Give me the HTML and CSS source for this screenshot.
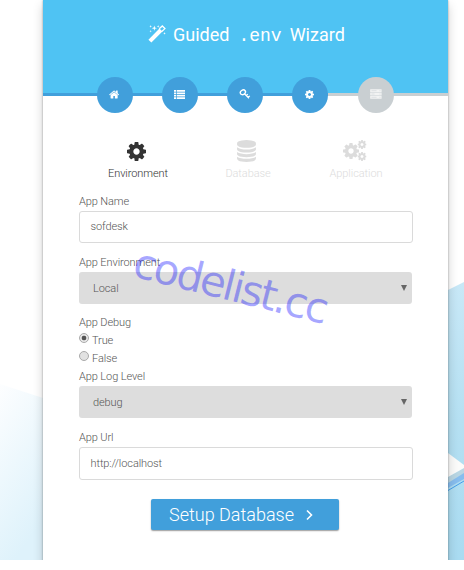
FILE: index.html
```html
<!DOCTYPE html>
<html lang="en">
<head>
<meta charset="utf-8">
<title>Guided .env Wizard</title>
<link rel="stylesheet" href="styles.css">
</head>
<body>
<svg class="defs" width="0" height="0">
  <symbol id="cog" viewBox="128 128 1536 1536"><path d="M1152 896q0-106-75-181t-181-75-181 75-75 181 75 181 181 75 181-75 75-181zm512-109v222q0 12-8 23t-20 13l-185 28q-19 54-39 91 35 50 107 138 10 12 10 25t-9 23q-27 37-99 108t-94 71q-12 0-26-9l-138-108q-44 23-91 38-16 136-29 186-7 28-36 28h-222q-14 0-24.5-8.5t-11.5-21.5l-28-184q-49-16-90-37l-141 107q-10 9-25 9-14 0-25-11-126-114-165-168-7-10-7-23 0-12 8-23 15-21 51-66.5t54-70.5q-27-50-41-99l-183-27q-13-2-21-12.5t-8-23.5v-222q0-12 8-23t19-13l186-28q14-46 39-92-40-57-107-138-10-12-10-24 0-10 9-23 26-36 98.5-107.5t94.5-71.5q13 0 26 10l138 107q44-23 91-38 16-136 29-186 7-28 36-28h222q14 0 24.5 8.5t11.5 21.5l28 184q49 16 90 37l142-107q9-9 24-9 13 0 25 10 129 119 165 170 7 8 7 22 0 12-8 23-15 21-51 66.5t-54 70.5q26 50 41 98l183 28q13 2 21 12.5t8 23.5z"/></symbol>
</svg>
<div class="page">
  <svg class="scenery" viewBox="0 0 464 560">
    <defs>
      <linearGradient id="left" x1="0" y1="0" x2=".35" y2="1"><stop offset="0" stop-color="#fdfeff"/><stop offset="1" stop-color="#def2fb"/></linearGradient>
      <linearGradient id="right" x1="0" y1="0" x2="0" y2="1"><stop offset="0" stop-color="#c8e8f7"/><stop offset=".5" stop-color="#b5e0f2"/><stop offset="1" stop-color="#a9dbf1"/></linearGradient>
    </defs>
    <path fill="url(#left)" d="M0 384L43 398V560H0z"/>
    <path fill="url(#right)" d="M448 290L464 282V560H448z"/>
    <path fill="#b9d6e3" d="M448 477L464 468V474L448 484z"/>
    <path fill="#87bdee" d="M448 483L464 473V479L448 488z"/>
    <path fill="none" stroke="#459eea" d="M448 490.5L464 481"/>
    <path fill="#fbfbfa" d="M448 453L464 465V468L448 477z"/>
  </svg>
  <main class="card">
    <header class="head">
      <svg class="wand" viewBox="0 0 17 17"><path fill="none" stroke="#fff" stroke-width="3.9" d="M1.8 15.2L12.2 4.8"/><path fill="none" stroke="#fff" stroke-width="1.2" d="M10.6 3.6L13.5.9L16 3.4L13 6.2"/><path fill="#fff" d="M6 .5l.6 1.9 1.9.6-1.9.6L6 5.5l-.6-1.9-1.9-.6 1.9-.6zM2.5.1l.3.9.9.3-.9.3-.3.9-.3-.9-.9-.3.9-.3zM9.6.1l.3.9.9.3-.9.3-.3.9-.3-.9-.9-.3.9-.3zM2.5 4.7l.3.9.9.3-.9.3-.3.9-.3-.9-.9-.3.9-.3zM15.6 6.7l.3.9.9.3-.9.3-.3.9-.3-.9-.9-.3.9-.3z"/></svg>
      <h1>Guided <code>.env</code> Wizard</h1>
    </header>
    <nav class="steps">
      <span class="step"><svg width="11" height="11" viewBox="0 0 1792 1792"><path d="M1408 992v480q0 26-19 45t-45 19h-384v-384h-256v384h-384q-26 0-45-19t-19-45v-480q0-1 .5-3t.5-3l575-474 575 474q1 2 1 6zm223-69l-62 74q-8 9-21 11h-3q-13 0-21-7l-692-577-692 577q-12 8-24 7-13-2-21-11l-62-74q-8-10-7-23.5t11-21.5l719-599q32-26 76-26t76 26l244 204v-195q0-14 9-23t23-9h192q14 0 23 9t9 23v408l219 182q10 8 11 21.5t-7 23.5z"/></svg></span>
      <span class="step"><svg width="11" height="9" viewBox="0 0 11 9"><path d="M0 0h2v1.7H0zM2.7 0H11v1.7H2.7zM0 2.4h2v1.7H0zM2.7 2.4H11v1.7H2.7zM0 4.8h2v1.7H0zM2.7 4.8H11v1.7H2.7zM0 7.2h2V9H0zM2.7 7.2H11V9H2.7z"/></svg></span>
      <span class="step"><svg width="12" height="12" viewBox="0 0 12 12"><g fill="none" stroke="#fff"><ellipse cx="3.9" cy="4.3" rx="2.7" ry="2.2" transform="rotate(-35 3.9 4.3)" stroke-width="1.4"/><path stroke-width="1.3" d="M5.5 5.8L10 10.3M7.4 7.6L8.8 6.3M9.2 9.4L10.8 7.9"/></g></svg></span>
      <span class="step"><svg width="9" height="9"><use href="#cog"/></svg></span>
      <span class="step pending"><svg width="12" height="10" viewBox="0 0 12 10"><path fill="#f2f3f3" d="M.2.3h11.4v2.8H.2zM.2 3.6h11.4v2.8H.2zM.2 6.9h11.4v2.8H.2z"/><path stroke="#c9cfd2" stroke-width=".5" d="M1.5 1.7h5M1.5 5h3M1.5 8.3h5M9.5 1.7h1M9.5 5h1M9.5 8.3h1"/></svg></span>
    </nav>
    <div class="tabs">
      <div class="tab active"><svg width="19" height="19"><use href="#cog"/></svg><span>Environment</span></div>
      <div class="tab"><svg width="19" height="22" viewBox="128 0 1536 1792"><path d="M896 768q237 0 443-43t325-127v170q0 69-103 128t-280 93.5-385 34.5-385-34.5-280-93.5-103-128v-170q119 84 325 127t443 43zm0 768q237 0 443-43t325-127v170q0 69-103 128t-280 93.5-385 34.5-385-34.5-280-93.5-103-128v-170q119 84 325 127t443 43zm0-384q237 0 443-43t325-127v170q0 69-103 128t-280 93.5-385 34.5-385-34.5-280-93.5-103-128v-170q119 84 325 127t443 43zm0-1152q208 0 385 34.5t280 93.5 103 128v128q0 69-103 128t-280 93.5-385 34.5-385-34.5-280-93.5-103-128v-128q0-69 103-128t280-93.5 385-34.5z"/></svg><span>Database</span></div>
      <div class="tab"><svg width="24" height="22" viewBox="0 0 24 22"><use href="#cog" x="0" y="3" width="16" height="16"/><use href="#cog" x="14.5" y="0" width="9" height="9"/><use href="#cog" x="14.5" y="12" width="9" height="9"/></svg><span>Application</span></div>
    </div>
    <form class="form">
      <label class="label">App Name</label>
      <div class="input">sofdesk</div>
      <label class="label gap">App Environment</label>
      <div class="select"><span>Local</span><i></i></div>
      <label class="label gap debug">App Debug</label>
      <div class="radio"><b class="on"></b><span>True</span></div>
      <div class="radio"><b></b><span>False</span></div>
      <label class="label">App Log Level</label>
      <div class="select"><span>debug</span><i></i></div>
      <label class="label gap">App Url</label>
      <div class="input tall">http://localhost</div>
      <div class="button"><span>Setup Database</span><svg width="7" height="12" viewBox="0 0 7 12"><path fill="none" stroke="#fff" stroke-width="1.6" d="M1 1.5L5.5 6L1 10.5"/></svg></div>
    </form>
  </main>
  <div class="watermark">codelist.cc</div>
</div>
</body>
</html>
```

FILE: styles.css
```css
* { box-sizing: border-box; }
body { margin: 0; background: #fff; font-family: Roboto, sans-serif; }
.defs { position: absolute; }
.page { position: relative; width: 464px; height: 560px; overflow: hidden; }
.scenery { position: absolute; left: 0; top: 0; width: 464px; height: 560px; }
.card { position: relative; width: 405px; height: 580px; margin-left: 43px; background: #fff; box-shadow: 0 0 2px rgba(0,0,0,.35), 0 5px 10px rgba(0,0,0,.19); }
.head { height: 93px; background: #4fc3f3; display: flex; padding: 25px 0 0 105px; }
.wand { width: 18px; height: 18px; flex: none; }
h1 { margin: -1px 0 0 7px; font-size: 18px; line-height: 22px; font-weight: 400; color: #fff; white-space: nowrap; display: flex; }
code { font: 18px/22px "Liberation Mono", monospace; margin: 1px 8px 0 9px; }
.steps { position: relative; height: 3px; background: linear-gradient(to right, #419fdb 285px, #c9cfd2 285px); display: flex; align-items: center; gap: 29px; padding-left: 54px; }
.step { flex: none; width: 36px; height: 36px; border-radius: 50%; background: #419fdb; display: flex; align-items: center; justify-content: center; fill: #fff; margin-top: 1px; }
.step svg { position: relative; top: -1px; left: -.5px; }
.step.pending { background: #c9cfd2; margin-left: 1px; }
.tabs { display: grid; grid-template-columns: 111px 109px 107px; margin: 43px 0 0 39.5px; height: 43px; font-size: 11px; font-weight: 300; color: #dcdcdc; fill: #dcdcdc; }
.tab { display: flex; flex-direction: column; align-items: center; justify-content: flex-end; line-height: 14px; letter-spacing: -.08px; }
.tab span { height: 17px; padding-top: 2px; }
.tab svg { margin-bottom: 3px; position: relative; left: -1.5px; }
.tab.active { color: #333; fill: #333; }
.tab.active svg { margin-bottom: 4px; }
.form { width: 334px; margin-left: 36px; padding-top: 10px; font-size: 11px; font-weight: 300; color: #555; letter-spacing: -.1px; }
.label { display: block; height: 19px; line-height: 20px; }
.gap { margin-top: 10px; }
.debug { height: 17px; line-height: 18px; }
.input { height: 32px; line-height: 29px; padding-left: 10.5px; border: 1px solid #dadada; border-radius: 3px; color: #555; }
.select { width: 333px; height: 32px; background: #ddd; border-radius: 3px; display: flex; align-items: center; justify-content: space-between; padding: 0 5px 0 14px; color: #555; }
.select i { border: 3.2px solid transparent; border-top: 6px solid #666; border-bottom: 0; }
.radio { height: 18px; display: flex; gap: 3px; line-height: 20px; }
.radio b { width: 10px; height: 10px; margin-top: 2px; border: 1px solid #aaa; border-radius: 50%; background: #e2e2e2; }
.radio b.on { background: radial-gradient(circle, #555 2px, #e9e9e9 2.7px); }
.input.tall { height: 33px; line-height: 31px; }
.button { width: 188px; height: 31px; margin: 19px 0 0 72px; background: #419fdb; border-radius: 2px; box-shadow: 0 1px 1.5px rgba(0,0,0,.4); color: #fff; font-size: 18px; font-weight: 300; line-height: 31px; padding-left: 18px; display: flex; align-items: center; gap: 12px; white-space: nowrap; letter-spacing: 0; }
.watermark { position: absolute; left: 130.5px; top: 240px; font: 42px/44px "DejaVu Sans", sans-serif; letter-spacing: -2.3px; color: rgba(0,0,255,.35); transform: rotate(14deg); transform-origin: 0 36px; white-space: nowrap; }
```
